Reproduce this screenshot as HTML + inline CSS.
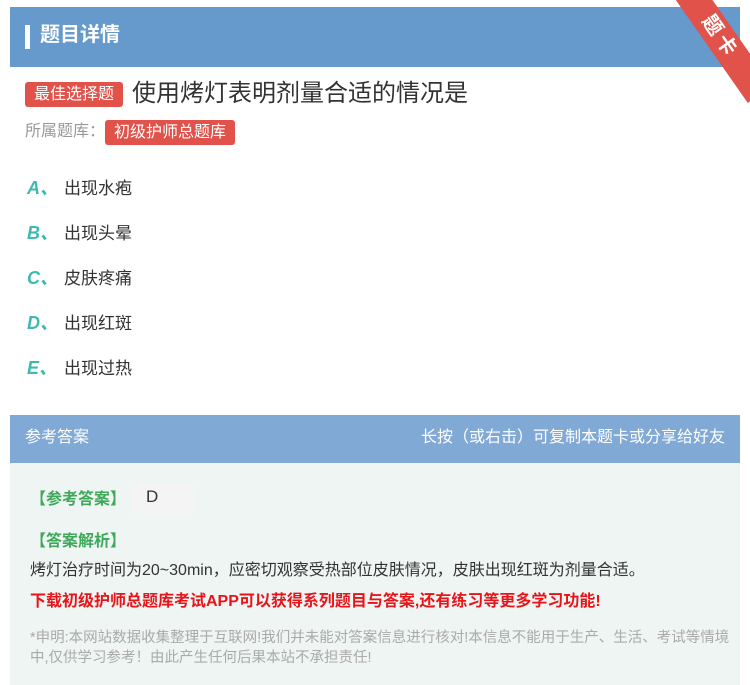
<!DOCTYPE html>
<html><head><meta charset="utf-8"><style>
*{margin:0;padding:0;box-sizing:border-box}
body{width:750px;height:685px;background:#fff;font-family:"Liberation Sans","Noto Sans CJK SC",sans-serif;position:relative;overflow:hidden;color:#333}
.hd{position:absolute;left:10px;top:7px;width:730px;height:60px;background:#6699cc}
.hd .bar{position:absolute;left:15px;top:18px;width:5px;height:24px;background:#fff}
.hd .t{position:absolute;left:30px;top:14px;color:#fff;font-size:20px;font-weight:bold;line-height:28px}
.rib{position:absolute;left:650px;top:22px;width:140px;height:30px;background:#e0524a;transform:rotate(55deg);color:#fff;font-size:20px;text-align:center;line-height:30px;font-weight:bold;letter-spacing:4px}
.tag{position:absolute;background:#e0524a;color:#fff;font-size:16px;border-radius:3px;padding:0 9px;line-height:25px}
.q{position:absolute;left:132px;top:78px;font-size:24px;line-height:32px;color:#333}
.lib{position:absolute;left:25px;top:121px;font-size:16px;color:#999;line-height:22px}
.opt{position:absolute;left:27px;font-size:17px;line-height:24px;color:#333}
.opt b{color:#3cbab0;font-style:italic;font-size:18px;display:inline-block;width:37px}
.ah{position:absolute;left:10px;top:415px;width:730px;height:48px;background:#80a9d5;color:#fff;font-size:16px;line-height:46px;padding:0 15px}
.ah span{float:right}
.ab{position:absolute;left:10px;top:463px;width:730px;height:222px;background:#eef5f3}
.g{position:absolute;left:30px;color:#3fa85a;font-size:16px;font-weight:bold}
.c{position:absolute;left:30px;font-size:16px;line-height:22px}
</style></head><body>
<div class="hd"><div class="bar"></div><div class="t">题目详情</div></div>
<div class="rib">题卡</div>
<div class="tag" style="left:25px;top:82px">最佳选择题</div>
<div class="q">使用烤灯表明剂量合适的情况是</div>
<div class="lib">所属题库：</div>
<div class="tag" style="left:105px;top:120px">初级护师总题库</div>
<div class="opt" style="top:176px"><b>A、</b>出现水疱</div>
<div class="opt" style="top:221px"><b>B、</b>出现头晕</div>
<div class="opt" style="top:266px"><b>C、</b>皮肤疼痛</div>
<div class="opt" style="top:311px"><b>D、</b>出现红斑</div>
<div class="opt" style="top:356px"><b>E、</b>出现过热</div>
<div class="ah">参考答案<span>长按（或右击）可复制本题卡或分享给好友</span></div>
<div class="ab"></div>
<div class="g" style="top:485px">【参考答案】</div>
<div style="position:absolute;left:132px;top:484px;width:62px;height:30px;background:#f4f4f4;font-size:17px;padding-left:14px;line-height:26px">D</div>
<div class="g" style="top:527px">【答案解析】</div>
<div class="c" style="top:560px;color:#333">烤灯治疗时间为20~30min，应密切观察受热部位皮肤情况，皮肤出现红斑为剂量合适。</div>
<div class="c" style="top:591px;color:#e8141a;font-weight:bold">下载初级护师总题库考试APP可以获得系列题目与答案,还有练习等更多学习功能!</div>
<div class="c" style="top:628px;color:#aaa;font-size:14.5px;line-height:20px;width:700px">*申明:本网站数据收集整理于互联网!我们并未能对答案信息进行核对!本信息不能用于生产、生活、考试等情境中,仅供学习参考！由此产生任何后果本站不承担责任!</div>
</body></html>
